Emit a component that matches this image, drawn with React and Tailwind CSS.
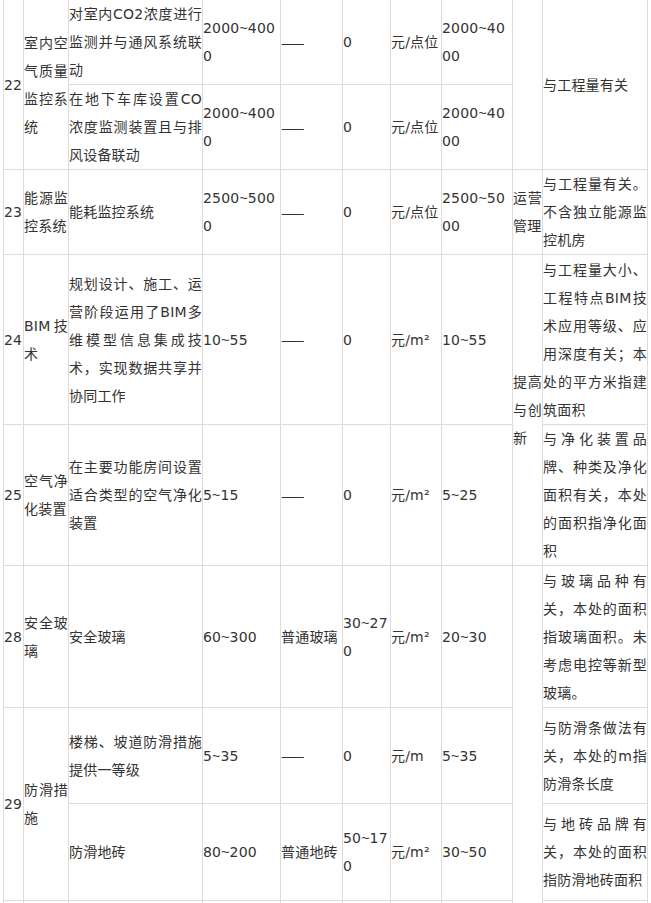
const rows = [
  {
    h: "h-[84px]",
    cells: [
      { t: "22", rs: 2 },
      { t: "室内空气质量监控系统", rs: 2 },
      { t: "对室内CO2浓度进行监测并与通风系统联动" },
      { t: "2000~4000" },
      { t: "——", dash: true },
      { t: "0" },
      { t: "元/点位" },
      { t: "2000~4000" },
      { t: "", rs: 2 },
      { t: "与工程量有关", rs: 2 },
    ],
  },
  {
    h: "h-[85px]",
    cells: [
      { t: "在地下车库设置CO浓度监测装置且与排风设备联动" },
      { t: "2000~4000" },
      { t: "——", dash: true },
      { t: "0" },
      { t: "元/点位" },
      { t: "2000~4000" },
    ],
  },
  {
    h: "h-[85px]",
    cells: [
      { t: "23" },
      { t: "能源监控系统" },
      { t: "能耗监控系统" },
      { t: "2500~5000" },
      { t: "——", dash: true },
      { t: "0" },
      { t: "元/点位" },
      { t: "2500~5000" },
      { t: "运营管理" },
      { t: "与工程量有关。不含独立能源监控机房" },
    ],
  },
  {
    h: "h-[170px]",
    cells: [
      { t: "24" },
      { t: "BIM技术" },
      { t: "规划设计、施工、运营阶段运用了BIM多维模型信息集成技术，实现数据共享并协同工作" },
      { t: "10~55" },
      { t: "——", dash: true },
      { t: "0" },
      { t: "元/m²" },
      { t: "10~55" },
      { t: "提高与创新", rs: 2 },
      { t: "与工程量大小、工程特点BIM技术应用等级、应用深度有关；本处的平方米指建筑面积" },
    ],
  },
  {
    h: "h-[140px]",
    cells: [
      { t: "25" },
      { t: "空气净化装置" },
      { t: "在主要功能房间设置适合类型的空气净化装置" },
      { t: "5~15" },
      { t: "——", dash: true },
      { t: "0" },
      { t: "元/m²" },
      { t: "5~25" },
      { t: "与净化装置品牌、种类及净化面积有关，本处的面积指净化面积" },
    ],
  },
  {
    h: "h-[142px]",
    cells: [
      { t: "28" },
      { t: "安全玻璃" },
      { t: "安全玻璃" },
      { t: "60~300" },
      { t: "普通玻璃" },
      { t: "30~270" },
      { t: "元/m²" },
      { t: "20~30" },
      { t: "", rs: 4 },
      { t: "与玻璃品种有关，本处的面积指玻璃面积。未考虑电控等新型玻璃。" },
    ],
  },
  {
    h: "h-[96px]",
    cells: [
      { t: "29", rs: 2 },
      { t: "防滑措施", rs: 2 },
      { t: "楼梯、坡道防滑措施提供一等级" },
      { t: "5~35" },
      { t: "——", dash: true },
      { t: "0" },
      { t: "元/m" },
      { t: "5~35" },
      { t: "与防滑条做法有关，本处的m指防滑条长度" },
    ],
  },
  {
    h: "h-[97px]",
    cells: [
      { t: "防滑地砖" },
      { t: "80~200" },
      { t: "普通地砖" },
      { t: "50~170" },
      { t: "元/m²" },
      { t: "30~50" },
      { t: "与地砖品牌有关，本处的面积指防滑地砖面积" },
    ],
  },
  {
    h: "h-[60px]",
    cells: [
      { t: "" },
      { t: "" },
      { t: "" },
      { t: "" },
      { t: "" },
      { t: "" },
      { t: "" },
      { t: "" },
      { t: "" },
    ],
  },
];

const widths = [
  "w-[20px]",
  "w-[45px]",
  "w-[134px]",
  "w-[78px]",
  "w-[62px]",
  "w-[48px]",
  "w-[51px]",
  "w-[71px]",
  "w-[30px]",
  "w-[105px]",
];

// tilde from a narrower face so ranges wrap like the source page
function CellText({ t }) {
  const parts = t.split("~");
  return parts.map((p, i) => (
    <span key={i}>
      {i > 0 && <span className="font-['Liberation_Sans',sans-serif]">~</span>}
      {p}
    </span>
  ));
}

export default function App() {
  return (
    <div className="bg-white min-h-screen overflow-hidden">
      <table className="ml-[3px] mt-[-1px] w-[645px] table-fixed border-collapse text-[14px] leading-[28px] tracking-[0.2px] text-[#333] font-['DejaVu_Sans','Noto_Sans_CJK_SC',sans-serif]">
        <colgroup>
          {widths.map((w, i) => (
            <col key={i} className={w} />
          ))}
        </colgroup>
        <tbody>
          {rows.map((row, i) => (
            <tr key={i} className={row.h}>
              {row.cells.map((c, j) => (
                <td
                  key={j}
                  rowSpan={c.rs || 1}
                  className="border border-[#dcdcdc] p-0 align-middle text-justify break-all"
                >
                  {c.dash ? (
                    <span className="font-['Noto_Sans_CJK_SC',sans-serif]">{c.t}</span>
                  ) : (
                    <CellText t={c.t} />
                  )}
                </td>
              ))}
            </tr>
          ))}
        </tbody>
      </table>
    </div>
  );
}
